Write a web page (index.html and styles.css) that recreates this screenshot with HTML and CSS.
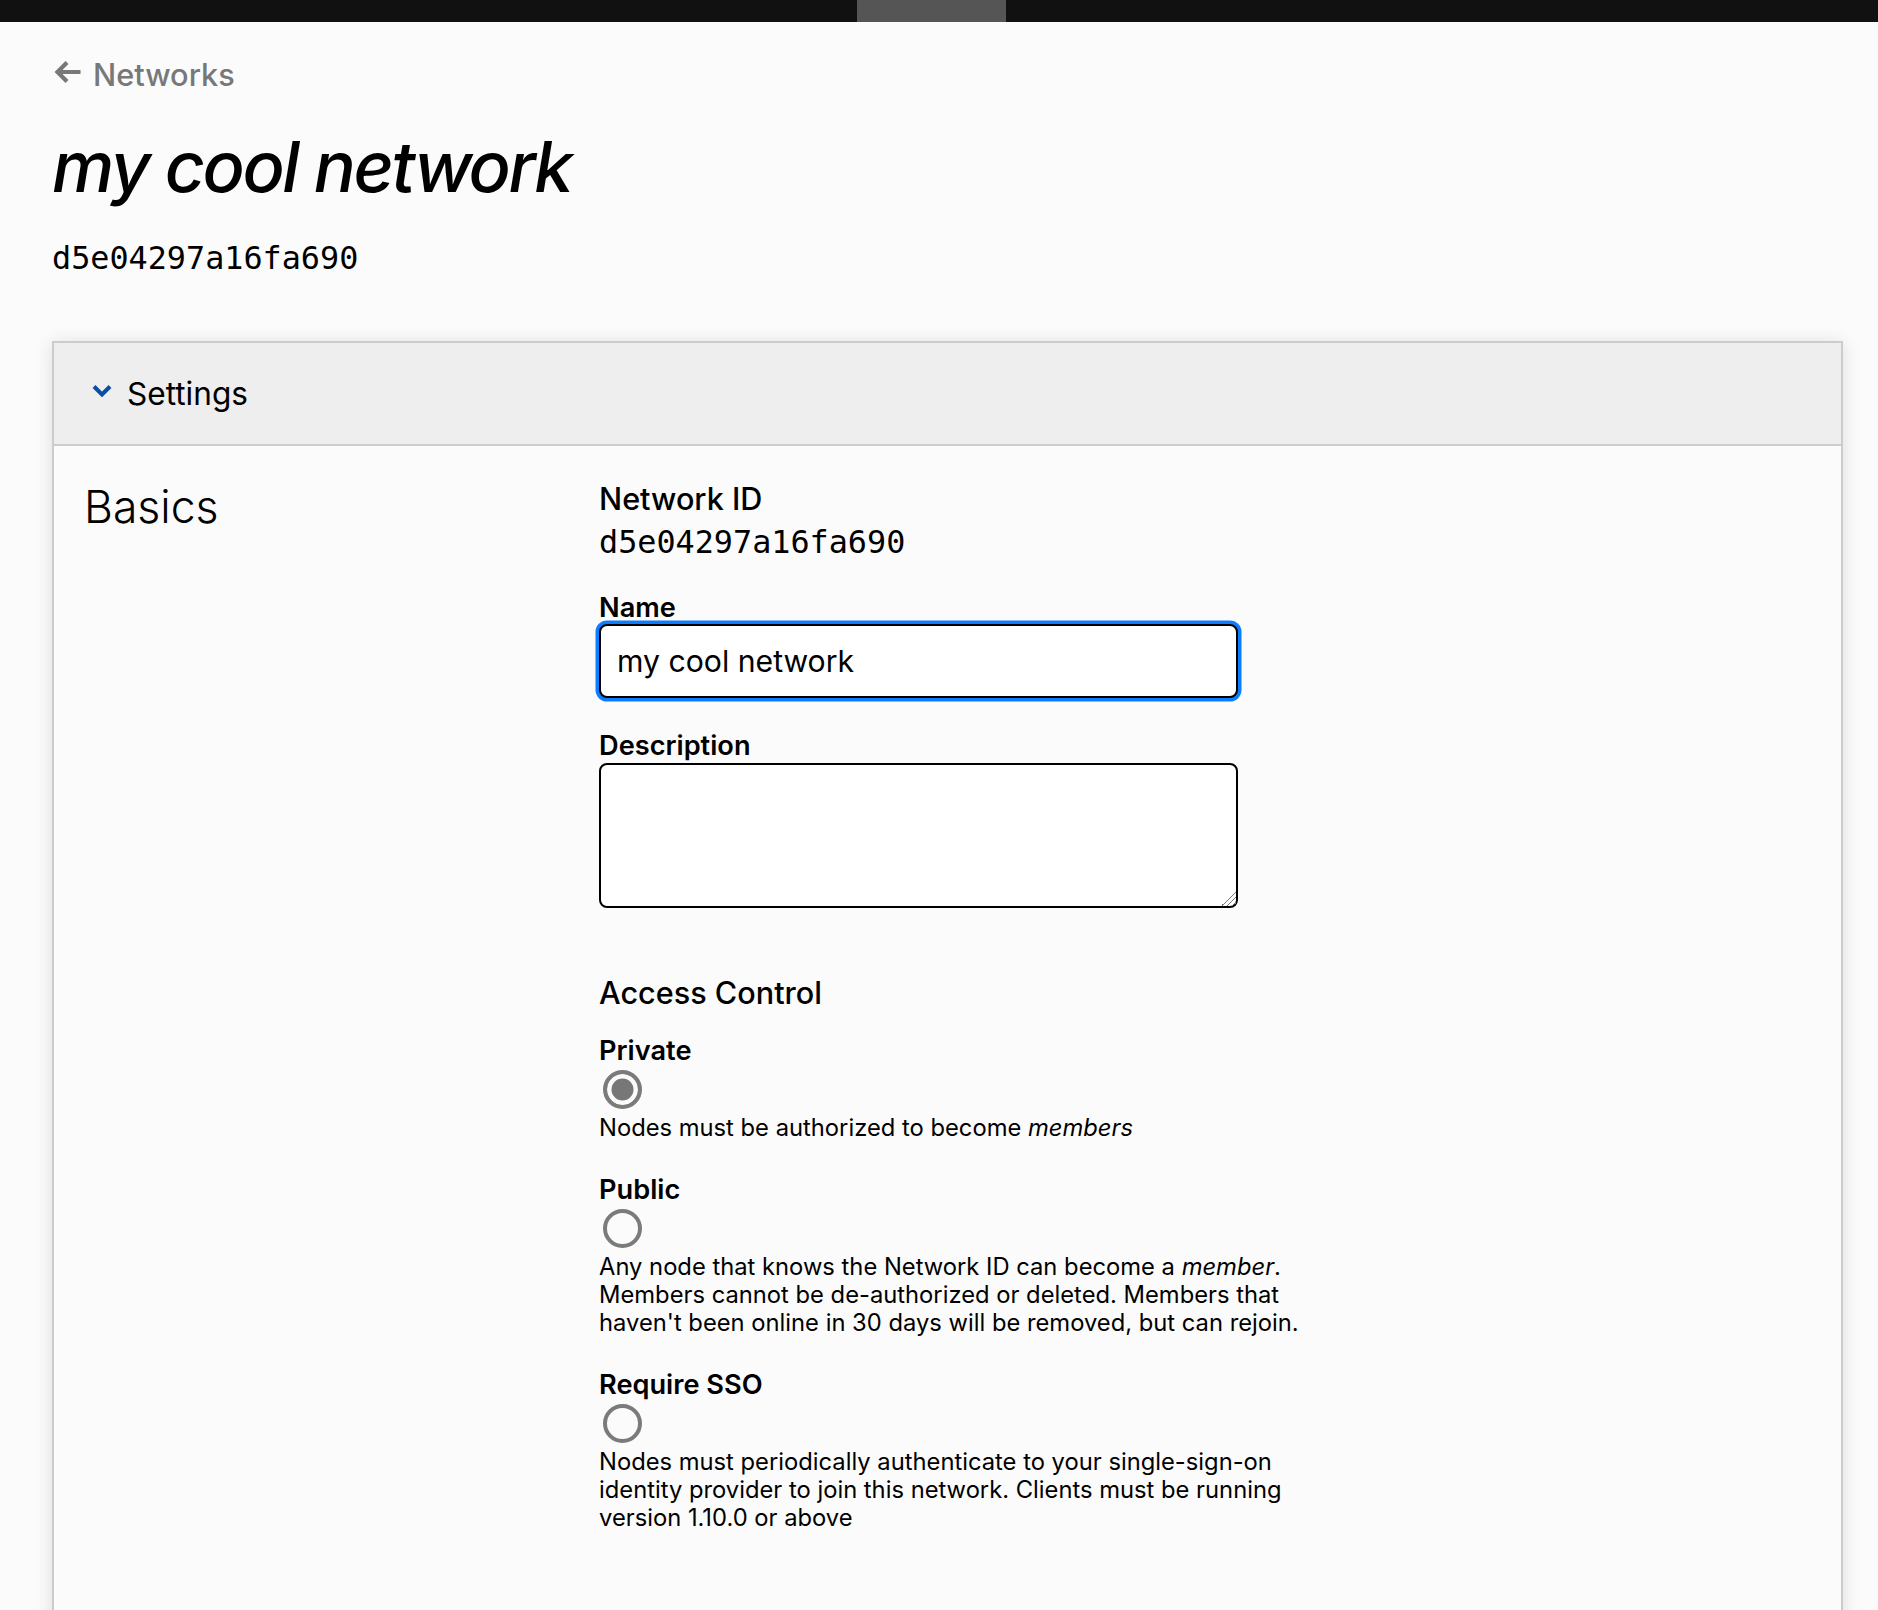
FILE: index.html
```html
<!DOCTYPE html>
<html lang="en">
<head>
<meta charset="utf-8">
<title>my cool network</title>
<link rel="stylesheet" href="styles.css">
</head>
<body>
<div class="topbar"><div class="topbar-seg"></div></div>
<main class="page">
  <a class="back" href="#">
    <svg class="back-arrow" width="28" height="24" viewBox="0 0 28 24" aria-hidden="true">
      <path d="M27.5 12H4.5M14 2.5L4.5 12L14 21.5" fill="none" stroke="currentColor" stroke-width="4.2"/>
    </svg>
    <span>Networks</span>
  </a>
  <h1 class="title">my cool network</h1>
  <div class="hash">d5e04297a16fa690</div>

  <section class="card">
    <header class="card-head">
      <svg class="chev" width="20" height="13" viewBox="0 0 20 13" aria-hidden="true">
        <path d="M2 2.5L10 10.5L18 2.5" fill="none" stroke="currentColor" stroke-width="4"/>
      </svg>
      <span>Settings</span>
    </header>
    <div class="card-body">
      <h2 class="basics">Basics</h2>
      <div class="fields">
        <div class="static-label">Network ID</div>
        <div class="hash hash-field">d5e04297a16fa690</div>

        <label class="lbl lbl-name" for="name">Name</label>
        <input class="input is-focused" id="name" type="text" value="my cool network">

        <label class="lbl lbl-desc" for="desc">Description</label>
        <textarea class="textarea" id="desc"></textarea>

        <h3 class="section-title">Access Control</h3>

        <div class="option option-first">
          <div class="lbl">Private</div>
          <input class="radio" type="radio" name="access" checked>
          <p class="opt-desc">Nodes must be authorized to become <em>members</em></p>
        </div>
        <div class="option">
          <div class="lbl">Public</div>
          <input class="radio" type="radio" name="access">
          <p class="opt-desc"><span class="sentence">Any node that knows the Network ID can become a <em>member</em>.</span><span class="sentence">Members cannot be de-authorized or deleted. Members that haven't been online in 30 days will be removed, but can rejoin.</span></p>
        </div>
        <div class="option">
          <div class="lbl">Require SSO</div>
          <input class="radio" type="radio" name="access">
          <p class="opt-desc">Nodes must periodically authenticate to your single-sign-on identity provider to join this network. Clients must be running version 1.10.0 or above</p>
        </div>
      </div>
    </div>
  </section>
</main>
</body>
</html>
```
FILE: styles.css
```css
* { box-sizing: border-box; }
html, body { margin: 0; }
body {
  background: #fbfbfb;
  color: #000;
  font-family: Inter, "Liberation Sans", Arial, sans-serif;
}

.topbar {
  height: 22px;
  background: #111;
  display: flex;
}
.topbar-seg {
  margin-left: 857px;
  width: 149px;
  background: #555;
}

.page {
  padding: 34px 35px 0 52px;
}

.back {
  display: flex;
  align-items: center;
  gap: 12px;
  height: 38px;
  padding-left: 1px;
  color: #787878;
  font-size: 30.7px;
  line-height: 38px;
  font-weight: 500;
  text-decoration: none;
}
.back-arrow { margin-top: -6px; }

.title {
  margin: 30px 0 0;
  font-size: 70px;
  line-height: 86px;
  font-style: italic;
  font-weight: 500;
  letter-spacing: -0.035em;
}

.hash {
  margin-top: 29px;
  font-family: "DejaVu Sans Mono", "Liberation Mono", monospace;
  font-size: 31.8px;
  line-height: 38px;
}

.card {
  margin-top: 64px;
  border: 2px solid #ccc;
  background: #fbfbfb;
  box-shadow: 0 2px 18px rgba(0, 0, 0, 0.12);
}
.card-head {
  display: flex;
  align-items: center;
  gap: 15px;
  padding: 32px 0 31px 38px;
  background: #eee;
  border-bottom: 2px solid #ccc;
  font-size: 31.6px;
  line-height: 38px;
}
.chev {
  color: #0b4ea6;
  margin-bottom: 8px;
}

.card-body {
  display: grid;
  grid-template-columns: 515px 1fr;
  padding: 35px 0 120px 30px;
}
.basics {
  margin: 0;
  font-size: 44.5px;
  line-height: 52px;
  font-weight: 300;
}
.fields {
  display: flex;
  flex-direction: column;
  align-items: flex-start;
}
.static-label {
  font-size: 30.6px;
  line-height: 36px;
  font-weight: 500;
}
.hash-field { margin-top: 6px; }

.lbl {
  display: block;
  font-size: 27.2px;
  line-height: 32px;
  font-weight: 600;
}
.lbl-name { margin-top: 31px; }
.lbl-desc { margin-top: 32px; }

.input {
  width: 639px;
  height: 74px;
  padding: 0 16px;
  border: 2px solid #000;
  border-radius: 8px;
  background: #fff;
  color: #000;
  font-family: Inter, "Liberation Sans", Arial, sans-serif;
  font-size: 30.2px;
  outline: none;
}
.input.is-focused {
  box-shadow: 0 0 0 3.5px #0d7cff;
}
.textarea {
  display: block;
  margin-top: 1px;
  width: 639px;
  height: 145px;
  border: 2px solid #000;
  border-radius: 8px;
  background: #fff;
  font-family: Inter, "Liberation Sans", Arial, sans-serif;
  font-size: 24px;
  outline: none;
}
.textarea::-webkit-scrollbar {
  width: 22px;
  height: 22px;
}
.textarea::-webkit-resizer {
  background: linear-gradient(135deg,
    transparent 0 50%, #7a7a7a 50% 56%,
    transparent 56% 67%, #7a7a7a 67% 73%,
    transparent 73% 84%, #7a7a7a 84% 90%,
    transparent 90%);
}

.section-title {
  margin: 67px 0 0;
  font-size: 30.6px;
  line-height: 36px;
  font-weight: 500;
}

.option { margin-top: 32px; }
.option-first { margin-top: 24px; }

.radio {
  display: block;
  appearance: none;
  -webkit-appearance: none;
  margin: 3px 0 0 4px;
  width: 39px;
  height: 39px;
  border: 4.5px solid #7b7b7b;
  border-radius: 50%;
  background: transparent;
}
.radio:checked {
  background: #777;
  box-shadow: inset 0 0 0 4.5px #fbfbfb;
}

.opt-desc {
  margin: 5px 0 0;
  width: 725px;
  font-size: 23.75px;
  line-height: 28px;
}
.opt-desc em { font-style: italic; }
.sentence { display: block; }
```
